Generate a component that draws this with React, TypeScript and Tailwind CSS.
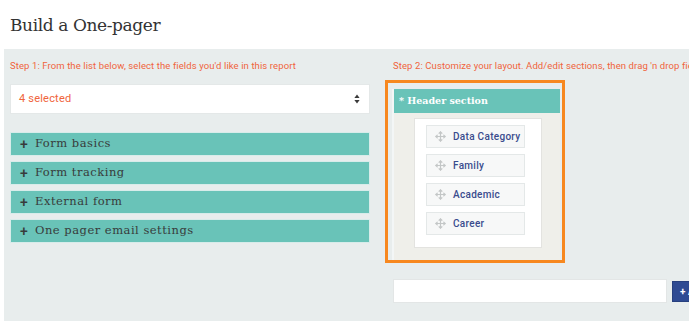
import React from "react";

const slab = { fontFamily: '"DejaVu Serif", serif' } as const;
const roboto = { fontFamily: 'Roboto, "Liberation Sans", sans-serif' } as const;

function MoveIcon() {
  return (
    <svg width="11" height="11" viewBox="0 0 24 24" fill="none" stroke="#c4c7c7" strokeWidth="2.6" strokeLinecap="round" strokeLinejoin="round">
      <path d="M12 2v20M2 12h20" />
      <path d="M9 5l3-3 3 3M9 19l3 3 3-3M5 9l-3 3 3 3M19 9l3 3-3 3" />
    </svg>
  );
}

function SelectArrows() {
  return (
    <svg width="6" height="10" viewBox="0 0 6 10">
      <path d="M3 0.5L5.6 4H0.4z" fill="#3a3a3a" />
      <path d="M3 9.5L5.6 6H0.4z" fill="#3a3a3a" />
    </svg>
  );
}

const accordion = ["Form basics", "Form tracking", "External form", "One pager email settings"];
const fields = ["Data Category", "Family", "Academic", "Career"];

export default function App() {
  return (
    <div className="w-[689px] h-[336px] overflow-hidden bg-white" style={roboto}>
      <div className="h-[49px] pl-[10px] pt-[13px] text-[17px] leading-[24px] text-[#333333] tracking-[-0.4px]" style={slab}>
        Build a One-pager
      </div>
      <div className="ml-[4px] w-[820px] h-[272px] bg-[#e8eded] flex pl-[6px] pt-[11px] gap-[15px]">
        {/* left column */}
        <div className="w-[360px] flex flex-col">
          <div className="h-[12px] leading-[12px] text-[9.5px] text-[#f0643c] tracking-[0.1px] whitespace-nowrap">
            Step 1: From the list below, select the fields you'd like in this report
          </div>
          <div className="mt-[12px] h-[30px] bg-white border border-[#e4e8e8] flex items-center justify-between pl-[8px] pr-[9px]">
            <span className="text-[11px] text-[#f0643c] tracking-[0.2px]">4 selected</span>
            <SelectArrows />
          </div>
          <div className="mt-[18px] flex flex-col gap-[5px]">
            {accordion.map((a) => (
              <div key={a} className="h-[24px] bg-[#69c3b8] border border-[#d8ecea] flex items-center pl-[9px] text-[#383b3b]">
                <span className="w-[15px] text-[14px] leading-none font-medium" style={roboto}>+</span>
                <span className="text-[11.5px] tracking-[0.5px]" style={slab}>{a}</span>
              </div>
            ))}
          </div>
        </div>
        {/* right column */}
        <div className="flex flex-col">
          <div className="h-[12px] leading-[12px] pl-[8px] text-[9.5px] text-[#f0643c] tracking-[0.1px] whitespace-nowrap">
            Step 2: Customize your layout. Add/edit sections, then drag 'n drop fields into sections
          </div>
          <div className="mt-[8px] w-[180px] h-[183px] border-[3px] border-[#f7881f] pt-[6px] pl-[4px] pr-[2px] overflow-hidden">
            <div className="h-full flex flex-col border-l-2 border-[#f3f6f6]">
              <div className="h-[24px] shrink-0 bg-[#69c3b8] flex items-center pl-[5px] text-white text-[9.5px] font-bold whitespace-nowrap" style={slab}>
                * Header section
              </div>
              <div className="flex-1 bg-[#efefea] pt-[5px] pl-[20px]">
                <div className="w-[128px] h-[130px] bg-white border border-[#e3e3e0] pt-[6px] pl-[11px] flex flex-col gap-[6px]">
                  {fields.map((f) => (
                    <div key={f} className="w-[99px] h-[23px] bg-[#f7f8f8] border border-[#e4e8e8] flex items-center pl-[8px] gap-[7px]">
                      <MoveIcon />
                      <span className="text-[10px] font-medium text-[#3a4c8e] tracking-[0.3px] whitespace-nowrap">{f}</span>
                    </div>
                  ))}
                </div>
              </div>
            </div>
          </div>
          <div className="mt-[16px] ml-[8px] flex items-center gap-[5px]">
            <div className="w-[274px] h-[24px] bg-white border border-[#e3e6e6]" />
            <div className="h-[21px] w-[80px] bg-[#2f4b93] border border-[#27407f] text-white text-[10px] font-bold flex items-center pl-[7px] whitespace-nowrap">
              + Add section
            </div>
          </div>
        </div>
      </div>
    </div>
  );
}
